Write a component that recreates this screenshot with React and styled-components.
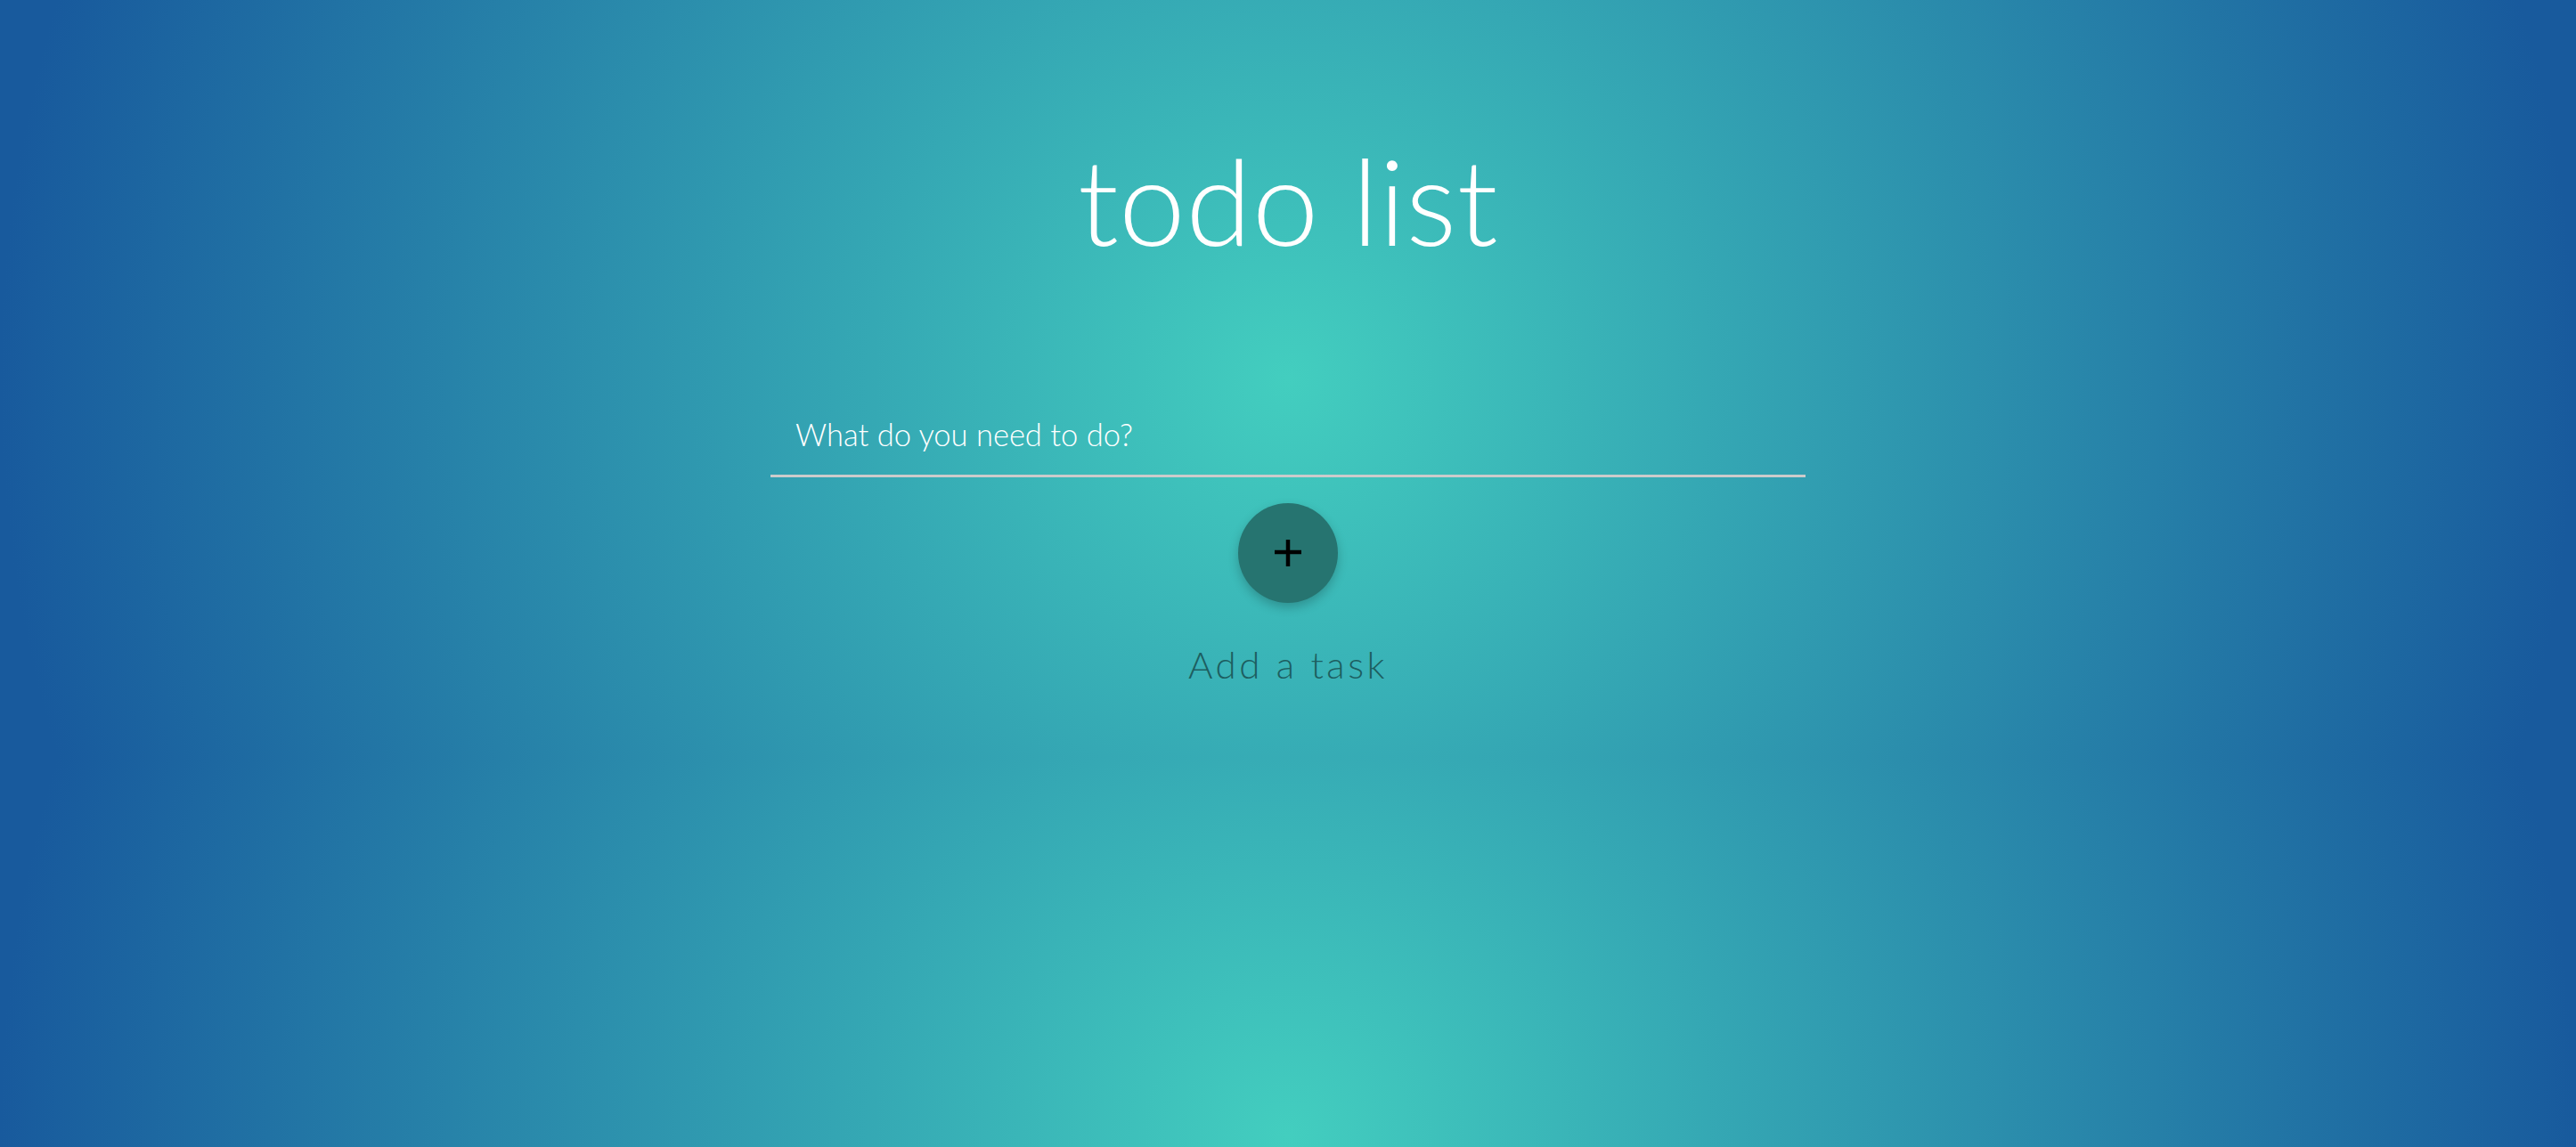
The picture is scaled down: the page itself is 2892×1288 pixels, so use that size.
import React, { useState } from 'react';
import styled, { createGlobalStyle } from 'styled-components';

const GlobalStyle = createGlobalStyle`
  html {
    background: radial-gradient(circle farthest-side, #43cebf 0%, #185a9d 100%);
    background-size: 100% 850px;
    background-repeat: repeat-y;
    min-height: 100%;
  }
  body {
    margin: 0;
    font-family: 'Lato', 'Open Sans', sans-serif;
  }
`;

const Page = styled.main`
  display: flex;
  flex-direction: column;
  align-items: center;
  padding-top: 158px;
`;

const Title = styled.h1`
  margin: 0;
  font-size: 134px;
  line-height: 134px;
  font-weight: 300;
  color: #fff;
  letter-spacing: 0.5px;
`;

const TaskInput = styled.input`
  box-sizing: border-box;
  width: 1162px;
  margin-top: 168px;
  padding: 7px 28px 24px;
  font-family: inherit;
  font-size: 34.5px;
  line-height: 42px;
  font-weight: 300;
  color: #fff;
  background: transparent;
  border: none;
  border-bottom: 3px solid #cbcbcb;
  outline: none;

  &::placeholder {
    color: #fff;
    opacity: 1;
  }
`;

const AddButton = styled.button`
  display: flex;
  align-items: center;
  justify-content: center;
  width: 112px;
  height: 112px;
  margin-top: 29px;
  padding: 0;
  border: none;
  border-radius: 50%;
  background: #267470;
  box-shadow: 0 5px 12px rgba(0, 0, 0, 0.22);
  cursor: pointer;
`;

const Caption = styled.p`
  margin: 43px 0 0;
  font-size: 42px;
  line-height: 52px;
  font-weight: 300;
  letter-spacing: 3.5px;
  color: #1d5e60;
`;

const PlusIcon = () => (
  <svg width="32" height="32" viewBox="0 0 32 32" aria-hidden="true">
    <path d="M16 1v30M1 15h30" stroke="#000" strokeWidth="4.5" fill="none" />
  </svg>
);

const App = () => {
  const [task, setTask] = useState('');

  return (
    <>
      <GlobalStyle />
      <Page>
        <Title>todo list</Title>
        <TaskInput
          type="text"
          value={task}
          onChange={(e) => setTask(e.target.value)}
          placeholder="What do you need to do?"
        />
        <AddButton type="button" aria-label="Add a task">
          <PlusIcon />
        </AddButton>
        <Caption>Add a task</Caption>
      </Page>
    </>
  );
};

export default App;
